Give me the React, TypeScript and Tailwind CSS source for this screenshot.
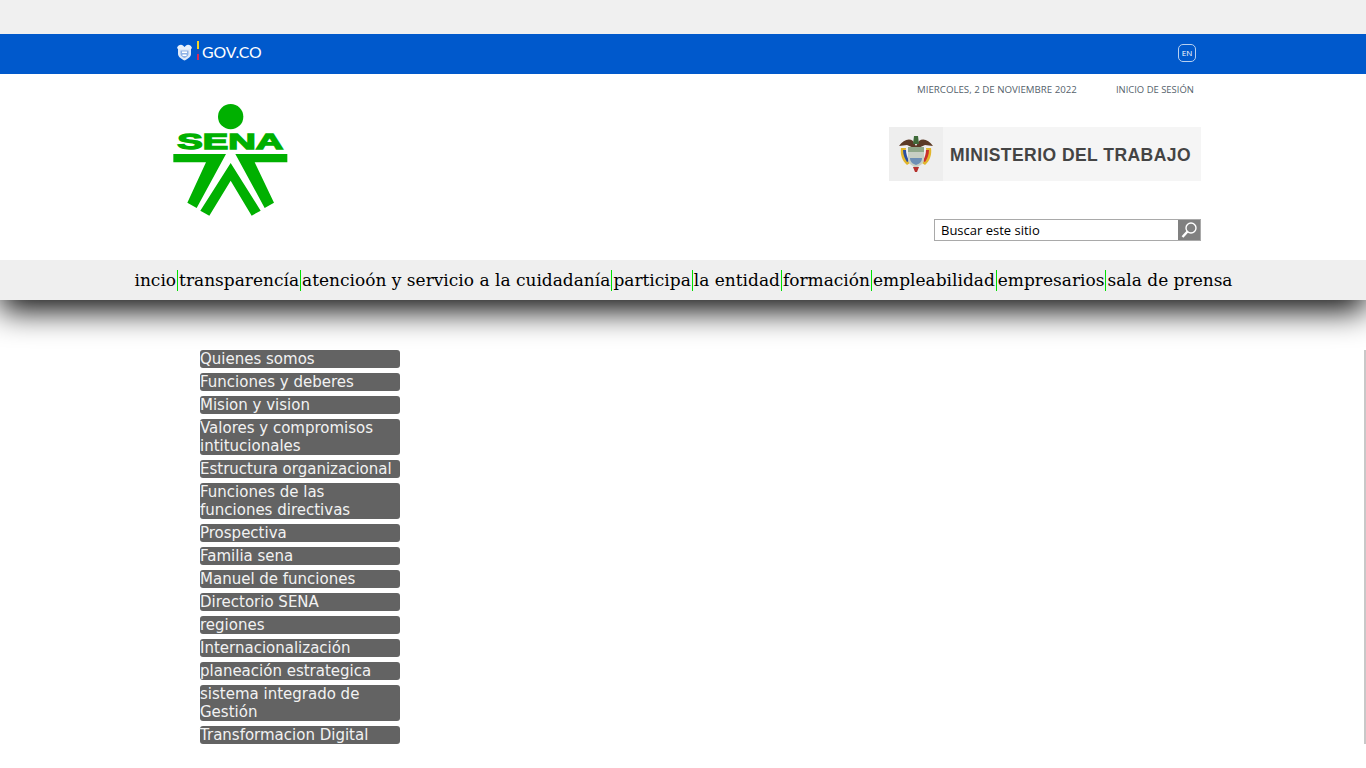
import React from 'react';

const navItems = [
  'incio',
  'transparencía',
  'atencioón y servicio a la cuidadanía',
  'participa',
  'la entidad',
  'formación',
  'empleabilidad',
  'empresarios',
  'sala de prensa',
];

const sideItems = [
  'Quienes somos',
  'Funciones y deberes',
  'Mision y vision',
  'Valores y compromisos intitucionales',
  'Estructura organizacional',
  'Funciones de las funciones directivas',
  'Prospectiva',
  'Familia sena',
  'Manuel de funciones',
  'Directorio SENA',
  'regiones',
  'Internacionalización',
  'planeación estrategica',
  'sistema integrado de Gestión',
  'Transformacion Digital',
];

const SenaLogo = () => (
  <svg width="120" height="116" viewBox="0 -72 360 348" className="block">
    <circle cx="182" cy="-34" r="38" fill="#00b000" />
    <text
      x="22"
      y="64"
      fontFamily="'Liberation Sans', sans-serif"
      fontWeight="700"
      fontSize="68"
      textLength="318"
      lengthAdjust="spacingAndGlyphs"
      fill="#00b000"
      stroke="#00b000"
      strokeWidth="4"
    >
      SENA
    </text>
    <path
      fill="#00b000"
      d="M10 78H168L80 240L52 224L108 103H10Z M196 78H352V103H254L312 224L284 240Z M182 105L272 248L245 263L182 158L118 263L91 248Z"
    />
  </svg>
);

const GovShield = () => (
  <svg width="15" height="18" viewBox="0 0 15 18" className="block">
    <path d="M0 5C1 2 4 1 6 2.5L7.5 4 9 2.5C11 1 14 2 15 5L13.5 6.5H1.5Z" fill="#e8f0fb" />
    <path d="M1 6H14V11C14 14 10.5 16 7.5 17.5 4.5 16 1 14 1 11Z" fill="#dfe9f8" />
    <path d="M3.5 7.5H11.5V11C11.5 13 9 14.5 7.5 15 6 14.5 3.5 13 3.5 11Z" fill="#8fb2e6" />
    <path d="M5 8.5H10V10H5ZM5.5 11.5H9.5V13H5.5Z" fill="#ffffff" />
  </svg>
);

const Escudo = () => (
  <svg width="36" height="40" viewBox="0 0 36 40" className="block">
    <path d="M1 12C5 6 11 4 15 7L18 12 21 7C25 4 31 6 35 12L27 11 18 15 9 11Z" fill="#5b3a26" />
    <path d="M16 2H20L21 10H15Z" fill="#3f6b3a" />
    <path d="M3 14C2 20 4 27 9 31L12 29C8 25 7 19 8 14Z" fill="#e2b62c" />
    <path d="M33 14C34 20 32 27 27 31L24 29C28 25 29 19 28 14Z" fill="#e2b62c" />
    <path d="M5 16C5 21 7 25 9 28L11 27C9 23 8 19 8 16Z" fill="#2a4f9e" />
    <path d="M31 16C31 21 29 25 27 28L25 27C27 23 28 19 28 16Z" fill="#c9302c" />
    <path d="M10 13H26V25C26 30 21 32 18 34 15 32 10 30 10 25Z" fill="#c7cfc4" />
    <path d="M10 13H26V18H10Z" fill="#8fa88a" />
    <path d="M12 24H24C24 28 21 30 18 31 15 30 12 28 12 24Z" fill="#6d8fb5" />
    <path d="M15 33H21L19 38H17Z" fill="#b5302c" />
  </svg>
);

const App: React.FC = () => {
  return (
    <div className="min-h-[768px] bg-white">
      <div className="h-[34px] bg-[#f0f0f0]" />

      <div className="h-10 bg-[#0059cc] flex items-center justify-between pl-[177px] pr-[170px]">
        <div className="flex items-center -mt-1">
          <GovShield />
          <div className="ml-[5px] w-[2px] h-[19px] flex flex-col -mt-1">
            <span className="h-[8px] bg-[#f5d327]" />
            <span className="h-[5px] bg-[#1f4fb5]" />
            <span className="h-[6px] bg-[#d6285a]" />
          </div>
          <span className="ml-[3px] text-white text-[15.8px] leading-none font-['Lato',sans-serif]">GOV.CO</span>
        </div>
        <span className="w-[18px] h-[18px] -mt-0.5 rounded-[5px] border border-[#b8d0f0] text-white text-[8px] flex items-center justify-center font-['Open_Sans',sans-serif]">
          EN
        </span>
      </div>

      <header className="relative z-10 h-[186px] bg-white flex justify-between pl-[170px] pr-[165px]">
        <div className="pt-[30px]">
          <SenaLogo />
        </div>
        <div className="w-[312px] flex flex-col items-end">
          <div className="w-full flex pt-[9px] pl-[28px] text-[9.7px] leading-[14px] whitespace-nowrap text-[#555f6b] font-['Open_Sans',sans-serif]">
            <span>MIERCOLES, 2 DE NOVIEMBRE 2022</span>
            <span className="ml-[39px] text-[9.45px]">INICIO DE SESIÓN</span>
          </div>
          <div className="mt-[30px] w-full h-[54px] bg-[#f5f5f5] flex items-center">
            <div className="w-[54px] h-full bg-[#eeeeee] flex items-center justify-center">
              <Escudo />
            </div>
            <span className="ml-[7px] pt-[2px] text-[#444444] text-[17.5px] font-bold tracking-[0.45px] whitespace-nowrap font-['Liberation_Sans',sans-serif]">
              MINISTERIO DEL TRABAJO
            </span>
          </div>
          <div className="mt-[38px] w-[267px] h-[22px] border border-[#a9a9a9] flex bg-white">
            <input
              readOnly
              value="Buscar este sitio"
              className="flex-1 min-w-0 pl-[6px] pt-[2px] outline-none text-[13px] text-black font-['Open_Sans',sans-serif]"
            />
            <span className="w-[22px] bg-[#808080] flex items-center justify-center">
              <svg width="16" height="16" viewBox="0 0 16 16" fill="none" stroke="#ffffff">
                <circle cx="10" cy="6" r="5" strokeWidth="1.4" />
                <path d="M6.5 9.5 1.5 15" strokeWidth="2.4" />
              </svg>
            </span>
          </div>
        </div>
      </header>

      <nav className="relative h-10 pl-[1px] bg-[#efefef] shadow-[0_10px_32px_#000000] flex items-center justify-center font-['DejaVu_Serif',serif] text-[17px] text-black">
        {navItems.map((item, i) => (
          <span
            key={item}
            className={`h-[21px] leading-[21px] whitespace-nowrap px-[1px] ${i > 0 ? 'border-l border-[#00e000]' : ''}`}
          >
            {item}
          </span>
        ))}
      </nav>

      <main className="mt-[50px] pl-[200px] border-r-2 border-[#c8c8c8]">
        <ul className="w-[200px] flex flex-col gap-[5px] font-['DejaVu_Sans',sans-serif] text-[15px] leading-[18px] text-[#f2f2f2]">
          {sideItems.map(item => (
            <li key={item} className="bg-[#636363] rounded-[3px]">
              {item}
            </li>
          ))}
        </ul>
      </main>
    </div>
  );
};

export default App;
